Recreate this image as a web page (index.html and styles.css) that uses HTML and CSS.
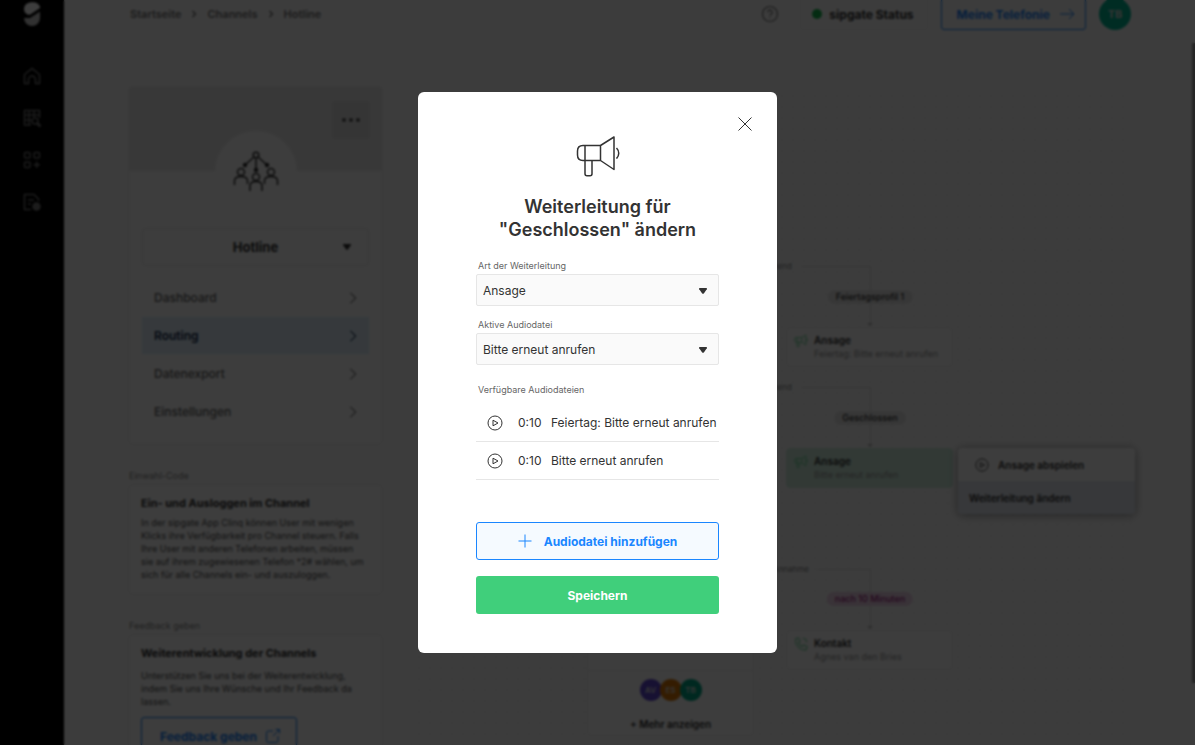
FILE: index.html
```html
<!DOCTYPE html>
<html lang="de">
<head>
  <meta charset="UTF-8">
  <meta name="viewport" content="width=device-width, initial-scale=1.0">
  <title>Hotline – Routing</title>
  <link rel="stylesheet" href="styles.css">
</head>
<body>

  <svg class="symbols" aria-hidden="true">
    <symbol id="chevron" viewBox="0 0 10 16"><path d="M2 2l6 6-6 6"/></symbol>
    <symbol id="play" viewBox="0 0 16 16"><circle cx="8" cy="8" r="7"/><path d="M6 5.2v5.6L11 8z"/></symbol>
    <symbol id="caret" viewBox="0 0 10 8"><path d="M2 1h6q1.600 0 .8 1.300L6 6.200q-1 1.100-2 0L1.200 2.300Q.4 1 2 1z" fill="currentColor" stroke="none"/></symbol>
    <symbol id="megaphone" viewBox="0 0 46 44"><path d="M25.500 10.500H8Q2.500 10.500 2.500 16v4q0 5.500 5.500 5.500h17.500M10 10.500v15M25.500 10.500v15M25.500 10.500L39 2v32.500l-13.500-9M10 25.500v13.200q0 2 2 2h3q2 0 2-2V25.500M41.500 13c3 3 3 7.600 0 10.600"/></symbol>
  </svg>

  <div class="app">
    <nav class="sidebar">
      <a href="#" class="logo" aria-label="sipgate">
        <svg viewBox="0 0 18 27"><path d="M17 6.500A8.300 6.800 0 0 0 1 8.500c0 4 2.500 6.500 6 6.300L17 8z"/><path d="M1 18h6l10-6.500v6.500A8 8 0 0 1 1 18z" opacity=".8"/></svg>
      </a>
      <a href="#" aria-label="Startseite"><svg viewBox="0 0 18 18"><path d="M1.500 7.500L9 1.500l7.500 6v9h-4v-4a3.500 3.500 0 0 0-7 0v4h-4z"/></svg></a>
      <a href="#" aria-label="Verlauf"><svg viewBox="0 0 18 18"><path d="M8 16H1.500V1.500h15V9M1.500 6h15M1.500 11H8M6 1.500V16M11 1.500V8"/><circle cx="12" cy="12" r="3"/><path d="M14.500 14.500l3 3" stroke-width="2.500"/></svg></a>
      <a href="#" aria-label="Apps"><svg viewBox="0 0 18 18"><rect x="1.500" y="1.500" width="5.500" height="5.500" rx="1"/><rect x="11" y="1.500" width="5.500" height="5.500" rx="1"/><rect x="1.500" y="11" width="5.500" height="5.500" rx="1"/><path d="M13.700 10.500v6.500M10.500 13.700H17"/></svg></a>
      <a href="#" aria-label="Verwaltung"><svg viewBox="0 0 18 18"><path d="M8 16.500H1.500v-15H11l4.500 4.500v2M5 7h6M5 11h3"/><circle cx="13.500" cy="13.500" r="3.500" fill="currentColor"/></svg></a>
    </nav>

    <div class="main">
      <header class="topbar">
        <div class="breadcrumb">
          <a href="#">Startseite</a>
          <svg viewBox="0 0 10 16"><use href="#chevron"/></svg>
          <a href="#">Channels</a>
          <svg viewBox="0 0 10 16"><use href="#chevron"/></svg>
          <a href="#">Hotline</a>
        </div>
        <div class="topbar-actions">
          <a href="#" class="help" aria-label="Hilfe"><svg viewBox="0 0 18 18"><circle cx="9" cy="9" r="7.500"/><path d="M6.800 7.300a2.200 2.200 0 1 1 3.200 2q-1 .5-1 1.500M9 12.300v1"/></svg></a>
          <a href="#" class="status"><span class="dot"></span>sipgate Status</a>
          <a href="#" class="btn-outline">Meine Telefonie<svg viewBox="0 0 16 12"><path d="M1 6h14M10 1l5 5-5 5"/></svg></a>
          <span class="avatar avatar-user">TB</span>
        </div>
      </header>

      <div class="content">
        <aside class="left">
          <section class="channel">
            <div class="hero">
              <button class="more" aria-label="Mehr"><i></i><i></i><i></i></button>
            </div>
            <div class="channel-icon">
              <svg viewBox="0 0 46 42"><circle cx="23" cy="4" r="2.800"/><path d="M21 6L12 14M23 7v12M25 6l9 8"/><circle cx="12" cy="14" r="1.500" fill="currentColor"/><circle cx="34" cy="14" r="1.500" fill="currentColor"/><circle cx="23" cy="19" r="1.500" fill="currentColor"/><circle cx="8" cy="21" r="3.500"/><circle cx="38" cy="21" r="3.500"/><circle cx="23" cy="26" r="3.500"/><path d="M1.500 34v-4q0-4.500 6.500-4.500t6.500 4.500v3M31.500 33v-3q0-4.500 6.500-4.500t6.500 4.500v4M17 40v-5q0-4.500 6-4.500t6 4.500v5"/></svg>
            </div>
            <button class="channel-select"><span>Hotline</span><svg viewBox="0 0 10 8"><use href="#caret"/></svg></button>
            <nav class="menu">
              <a href="#">Dashboard<svg viewBox="0 0 10 16"><use href="#chevron"/></svg></a>
              <a href="#" class="active">Routing<svg viewBox="0 0 10 16"><use href="#chevron"/></svg></a>
              <a href="#">Datenexport<svg viewBox="0 0 10 16"><use href="#chevron"/></svg></a>
              <a href="#">Einstellungen<svg viewBox="0 0 10 16"><use href="#chevron"/></svg></a>
            </nav>
          </section>

          <div class="caption">Einwahl-Code</div>
          <section class="info">
            <h2>Ein- und Ausloggen im Channel</h2>
            <p>In der sipgate App Clinq können User mit wenigen<br>Klicks ihre Verfügbarkeit pro Channel steuern. Falls<br>Ihre User mit anderen Telefonen arbeiten, müssen<br>sie auf ihrem zugewiesenen Telefon *2# wählen, um<br>sich für alle Channels ein- und auszuloggen.</p>
          </section>

          <div class="caption">Feedback geben</div>
          <section class="info feedback">
            <h2>Weiterentwicklung der Channels</h2>
            <p>Unterstützen Sie uns bei der Weiterentwicklung,<br>indem Sie uns Ihre Wünsche und Ihr Feedback da<br>lassen.</p>
            <a href="#" class="btn-outline btn-feedback">Feedback geben<svg viewBox="0 0 16 16"><path d="M8 3H3.500Q1.500 3 1.500 5v7.500q0 2 2 2H11q2 0 2-2V8M8 8l6.500-6.500M10.500 1.500h4v4"/></svg></a>
          </section>
        </aside>

        <div class="canvas">
          <span class="edge-label label-1">abweichend</span>
          <div class="edge edge-1"></div>
          <span class="pill pill-1">Feiertagsprofil 1</span>
          <div class="node node-1">
            <svg viewBox="0 0 46 44"><use href="#megaphone"/></svg>
            <div><b>Ansage</b><small>Feiertag: Bitte erneut anrufen</small></div>
          </div>

          <span class="edge-label label-2">abweichend</span>
          <div class="edge edge-2"></div>
          <span class="pill pill-2">Geschlossen</span>
          <div class="node node-2 selected">
            <svg viewBox="0 0 46 44"><use href="#megaphone"/></svg>
            <div><b>Ansage</b><small>Bitte erneut anrufen</small></div>
          </div>

          <span class="edge-label label-3">keine Annahme</span>
          <div class="edge edge-3"></div>
          <span class="pill pill-3">nach 10 Minuten</span>
          <div class="node node-3">
            <svg viewBox="0 0 16 16"><path d="M2 2l3-1 2 4-2 1.500Q6.500 10 9.500 11L11 9l4 2-1 3.500Q6 16 2 7zM10 1.500a5 5 0 0 1 4.500 4.500"/></svg>
            <div><b>Kontakt</b><small>Agnes van den Bries</small></div>
          </div>

          <div class="group">
            <div class="group-people">
              <span class="avatar purple">AV</span><span class="avatar orange">ES</span><span class="avatar teal">TB</span>
            </div>
            <a href="#">+ Mehr anzeigen</a>
          </div>

          <div class="popup">
            <button><svg viewBox="0 0 16 16"><use href="#play"/></svg>Ansage abspielen</button>
            <button class="hover">Weiterleitung ändern</button>
          </div>
        </div>
      </div>
    </div>
    <div class="scrollbar"></div>
  </div>

  <div class="overlay">
    <div class="modal" role="dialog" aria-labelledby="modal-title">
      <button class="close" aria-label="Schließen"><svg viewBox="0 0 14 14"><path d="M.5.5l13 13M13.500.5l-13 13"/></svg></button>
      <svg class="modal-icon" viewBox="0 0 46 44"><use href="#megaphone"/></svg>
      <h1 id="modal-title">Weiterleitung für<br>"Geschlossen" ändern</h1>

      <div class="field">
        <label for="type">Art der Weiterleitung</label>
        <div class="select">
          <select id="type"><option>Ansage</option></select>
          <svg viewBox="0 0 10 8"><use href="#caret"/></svg>
        </div>
      </div>
      <div class="field">
        <label for="audio">Aktive Audiodatei</label>
        <div class="select">
          <select id="audio"><option>Bitte erneut anrufen</option></select>
          <svg viewBox="0 0 10 8"><use href="#caret"/></svg>
        </div>
      </div>

      <div class="list-title">Verfügbare Audiodateien</div>
      <ul class="files">
        <li>
          <button aria-label="Abspielen"><svg viewBox="0 0 16 16"><use href="#play"/></svg></button>
          <span class="time">0:10</span><span class="name">Feiertag: Bitte erneut anrufen</span>
        </li>
        <li>
          <button aria-label="Abspielen"><svg viewBox="0 0 16 16"><use href="#play"/></svg></button>
          <span class="time">0:10</span><span class="name">Bitte erneut anrufen</span>
        </li>
      </ul>

      <button class="btn btn-add"><svg viewBox="0 0 14 14"><path d="M7 .5v13M.5 7h13"/></svg>Audiodatei hinzufügen</button>
      <button class="btn btn-save">Speichern</button>
    </div>
  </div>

</body>
</html>
```
FILE: styles.css
```css
* {
  box-sizing: border-box;
}

body {
  margin: 0;
  font-family: Inter, "Liberation Sans", sans-serif;
  font-size: 12px;
  color: #333;
  background: #fbfbfb;
  height: 100vh;
  overflow: hidden;
}

svg {
  display: block;
  flex: none;
  fill: none;
  stroke: currentColor;
  overflow: visible;
}

a {
  color: inherit;
  text-decoration: none;
}

button {
  font: inherit;
  color: inherit;
  border: 0;
  background: none;
  padding: 0;
  cursor: pointer;
}

.symbols {
  position: absolute;
  width: 0;
  height: 0;
}

/* App behind the dialog */
.app {
  display: flex;
  height: 100vh;
  overflow: hidden;
}

.sidebar {
  flex: none;
  width: 64px;
  background: #000;
  color: #777;
  display: flex;
  flex-direction: column;
  align-items: center;
  gap: 24px;
}

.sidebar svg {
  width: 18px;
  height: 18px;
  stroke-width: 1.5;
}

.sidebar .logo {
  margin-bottom: 16px;
}

.sidebar .logo svg {
  width: 18px;
  height: 27px;
  fill: #fff;
  stroke: none;
}

.main {
  flex: 1;
  padding: 0 64px;
}

.topbar {
  height: 28px;
  display: flex;
  align-items: center;
  justify-content: space-between;
}

.breadcrumb {
  display: flex;
  align-items: center;
  gap: 10px;
  padding-left: 2px;
  font-size: 11px;
  font-weight: 600;
  color: #777;
}

.breadcrumb svg {
  width: 6px;
  height: 8px;
  stroke-width: 3;
}

.topbar-actions {
  display: flex;
  align-items: center;
  gap: 13px;
  font-weight: 700;
}

.help {
  margin-right: 8px;
  color: #777;
}

.help svg {
  width: 18px;
  height: 18px;
  stroke-width: 1.2;
}

.status {
  display: flex;
  align-items: center;
  gap: 7px;
  height: 32px;
  padding: 0 13px 0 11px;
  border: 1px solid #f0f0f0;
  border-radius: 3px;
}

.dot {
  width: 10px;
  height: 10px;
  border-radius: 50%;
  background: #12b84c;
}

.btn-outline {
  display: flex;
  align-items: center;
  gap: 9px;
  height: 32px;
  padding: 0 10px 0 15px;
  border: 1px solid #1a82f7;
  border-radius: 3px;
  color: #1a82f7;
  font-weight: 700;
}

.btn-outline svg {
  width: 16px;
  height: 12px;
  stroke-width: 1;
}

.avatar {
  display: flex;
  align-items: center;
  justify-content: center;
  width: 22px;
  height: 22px;
  border-radius: 50%;
  font-size: 8px;
  color: #ddd;
}

.avatar-user {
  width: 32px;
  height: 32px;
  font-size: 11px;
  background: #00b894;
}

.content {
  display: flex;
  align-items: flex-start;
  gap: 28px;
  margin-top: 58px;
}

.left {
  flex: none;
  width: 255px;
}

.channel,
.info {
  border: 1px solid #ebebeb;
  border-radius: 5px;
  background: #fdfdfd;
}

.channel {
  padding-bottom: 14px;
}

.hero {
  height: 84px;
  padding: 14px 12px;
  background: #ebebeb;
  display: flex;
  justify-content: flex-end;
  align-items: flex-start;
}

.more {
  width: 38px;
  height: 38px;
  border-radius: 3px;
  background: #dedede;
  display: flex;
  align-items: center;
  justify-content: center;
  gap: 3px;
}

.more i {
  width: 4px;
  height: 4px;
  border-radius: 50%;
  background: #555;
}

.channel-icon {
  width: 82px;
  height: 82px;
  margin: -40px auto 15px;
  border-radius: 50%;
  background: #fdfdfd;
  display: flex;
  align-items: center;
  justify-content: center;
}

.channel-icon svg {
  width: 46px;
  height: 42px;
  stroke-width: 1.5;
}

.channel-select {
  display: flex;
  align-items: center;
  width: 227px;
  height: 38px;
  margin: 0 auto 13px;
  padding: 0 16px 0 26px;
  border: 1px solid #ebebeb;
  border-radius: 4px;
  font-size: 13px;
  font-weight: 700;
}

.channel-select span {
  flex: 1;
}

.channel-select svg {
  width: 10px;
  height: 8px;
}

.menu {
  display: flex;
  flex-direction: column;
  gap: 1px;
  padding: 0 13px;
}

.menu a {
  display: flex;
  align-items: center;
  justify-content: space-between;
  height: 37px;
  padding: 0 11px 0 12px;
  font-weight: 500;
  color: #666;
}

.menu svg {
  width: 10px;
  height: 14px;
  stroke-width: 1.2;
}

.menu .active {
  background: #dfeffb;
  color: #14294a;
  font-weight: 600;
}

.caption {
  margin: 25px 0 3px 1px;
  font-size: 9px;
  line-height: 11px;
  color: #888;
}

.info {
  padding: 10px 12px 13px;
}

.info h2 {
  margin: 0 0 5px;
  font-size: 11px;
  line-height: 16px;
  font-weight: 700;
}

.info p {
  margin: 0;
  font-size: 9px;
  line-height: 13px;
  white-space: nowrap;
  color: #555;
}

.info.feedback h2 {
  margin-bottom: 8px;
}

.btn-feedback {
  width: 156px;
  height: 38px;
  margin-top: 9px;
  padding: 0 13px 0 18px;
  gap: 8px;
}

.btn-feedback svg {
  height: 16px;
}

/* Routing canvas, nodes are placed freely */
.canvas {
  position: relative;
  flex: 1;
  height: 800px;
  border: 1px solid #f3f3f3;
  background: radial-gradient(circle, #ebebeb 1px, transparent 1px) 2px 4px / 11px 11px;
}

.edge-label,
.edge,
.pill,
.node,
.group,
.popup {
  position: absolute;
}

.edge-label {
  font-size: 8px;
  line-height: 10px;
  color: #888;
}

.edge {
  left: 389px;
  width: 70px;
  height: 60px;
  border-top: 1px solid #ddd;
  border-right: 1px solid #ddd;
}

.edge::after {
  content: "";
  position: absolute;
  right: -3px;
  bottom: 0;
  border: 3px solid transparent;
  border-top-color: #bbb;
  border-bottom: 0;
}

.pill {
  left: 458px;
  transform: translateX(-50%);
  padding: 0 8px;
  border-radius: 7px;
  font-size: 9px;
  line-height: 14px;
  font-weight: 500;
  white-space: nowrap;
  background: #e6e6e6;
}

.node {
  left: 374px;
  width: 167px;
  height: 40px;
  padding-left: 7px;
  border: 1px solid #eee;
  border-radius: 4px;
  background: #fdfdfd;
  display: flex;
  align-items: center;
  gap: 6px;
}

.node svg {
  width: 14px;
  height: 14px;
  margin-bottom: 12px;
  color: #6fd699;
  stroke-width: 3;
}

.node b,
.node small {
  display: block;
  line-height: 14px;
}

.node b {
  font-size: 10px;
  font-weight: 600;
}

.node small {
  font-size: 9px;
  color: #999;
}

.selected {
  background: #cfeedd;
  border-color: #cfeedd;
}

.label-1 { right: 338px; top: 174px; }
.edge-1 { top: 179px; }
.pill-1 { top: 203px; }
.node-1 { top: 240px; }

.label-2 { right: 338px; top: 295px; }
.edge-2 { top: 300px; }
.pill-2 { top: 324px; }
.node-2 { top: 361px; }

.label-3 { right: 321px; top: 477px; }
.edge-3 { top: 482px; left: 405px; width: 54px; }
.pill-3 { top: 505px; background: #eed3e8; color: #9c1f7e; }
.node-3 { top: 543px; }
.node-3 svg { stroke-width: 1.2; }

.group {
  left: 175px;
  top: 520px;
  width: 167px;
  height: 129px;
  padding-top: 62px;
  border: 1px solid #eee;
  border-radius: 4px;
  background: linear-gradient(#eee, #eee) 0 62px / 100% 1px no-repeat #fdfdfd;
  text-align: center;
  font-size: 10px;
  font-weight: 600;
}

.group-people {
  display: flex;
  justify-content: center;
  margin: 9px 0 17px;
}

.group-people .avatar + .avatar {
  margin-left: -2px;
}

.purple { background: #6048d0; }
.orange { background: #d97706; }
.teal { background: #00a886; }

.popup {
  left: 546px;
  top: 361px;
  width: 177px;
  border-radius: 4px;
  background: #fff;
  box-shadow: 0 1px 10px rgba(0, 0, 0, 0.4);
  overflow: hidden;
}

.popup button {
  display: flex;
  align-items: center;
  gap: 9px;
  width: 100%;
  height: 33px;
  padding-left: 11px;
  font-size: 10px;
  font-weight: 600;
}

.popup svg {
  width: 14px;
  height: 14px;
  margin-left: 6px;
}

.popup .hover {
  background: #e4e9f2;
}

.scrollbar {
  position: absolute;
  right: 0;
  top: 43px;
  width: 3px;
  height: 640px;
  background: #999;
}

/* Dialog */
.overlay {
  position: fixed;
  inset: 0;
  display: flex;
  align-items: center;
  justify-content: center;
  background: rgba(0, 0, 0, 0.76);
  backdrop-filter: blur(1px);
}

.modal {
  position: relative;
  width: 359px;
  padding: 43px 58px 39px;
  border-radius: 6px;
  background: #fff;
}

.close {
  position: absolute;
  top: 25px;
  right: 25px;
}

.close svg {
  width: 14px;
  height: 14px;
}

.modal-icon {
  width: 46px;
  height: 44px;
  margin: 0 auto 16px;
  stroke-width: 1.5;
  stroke-linejoin: round;
}

h1 {
  margin: 0 0 18px;
  font-size: 18px;
  line-height: 23px;
  font-weight: 600;
  text-align: center;
}

.field {
  margin-bottom: 12px;
}

.field label,
.list-title {
  display: block;
  padding-left: 2px;
  font-size: 9px;
  line-height: 13px;
  color: #666;
}

.select {
  position: relative;
  margin-top: 2px;
}

.select select {
  display: block;
  width: 100%;
  height: 32px;
  padding: 0 28px 0 6px;
  border: 1px solid #e6e6e6;
  border-radius: 2px;
  background: #fafafa;
  color: #333;
  font: inherit;
  appearance: none;
}

.select svg {
  position: absolute;
  right: 11px;
  top: 13px;
  width: 10px;
  height: 8px;
  pointer-events: none;
}

.list-title {
  margin-top: 18px;
}

.files {
  list-style: none;
  margin: 8px 0 42px;
  padding: 0;
}

.files li {
  display: flex;
  align-items: center;
  height: 38px;
  padding-left: 11px;
  border-bottom: 1px solid #e6e6e6;
  overflow: hidden;
  white-space: nowrap;
}

.files svg {
  width: 16px;
  height: 16px;
}

.time {
  flex: none;
  width: 33px;
  margin-left: 15px;
}

.btn {
  display: flex;
  align-items: center;
  justify-content: center;
  width: 100%;
  height: 38px;
  border-radius: 3px;
  font-weight: 700;
}

.btn-add {
  gap: 12px;
  margin-bottom: 16px;
  border: 1px solid #1a86ff;
  background: #f5faff;
  color: #1a86ff;
}

.btn-add svg {
  width: 14px;
  height: 14px;
}

.btn-save {
  background: #40cf7b;
  color: #fff;
}
```
